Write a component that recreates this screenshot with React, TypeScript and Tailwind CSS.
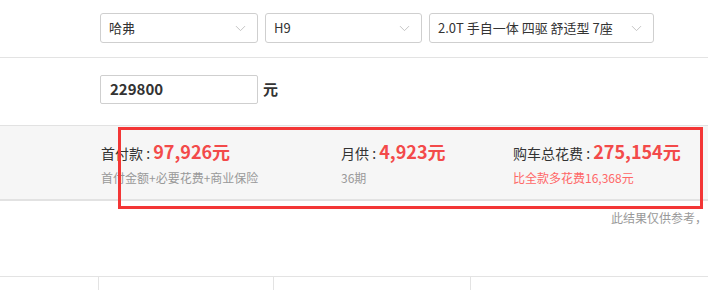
import { ChevronDown } from 'lucide-react';

const font = { fontFamily: '"Microsoft YaHei", "Noto Sans CJK SC", "Noto Sans", sans-serif' };

function Select({ value, width }: { value: string; width: string }) {
  return (
    <div
      className={`flex h-[30px] ${width} items-center justify-between rounded-[3px] border border-[#cfcfcf] bg-white pl-[8px] pr-[8px] text-[13px] text-[#333]`}
    >
      <span className="whitespace-nowrap">{value}</span>
      <ChevronDown className="h-[17px] w-[17px] text-[#bbb]" strokeWidth={1.2} />
    </div>
  );
}

export default function App() {
  return (
    <div className="relative h-[290px] w-[708px] overflow-hidden bg-white" style={font}>
      <div className="flex h-[58px] gap-[7px] border-b border-[#e3e3e3] pl-[100px] pt-[13px]">
        <Select value="哈弗" width="w-[158px]" />
        <Select value="H9" width="w-[157px]" />
        <Select value="2.0T 手自一体 四驱 舒适型 7座" width="w-[225px]" />
      </div>

      <div className="flex h-[67px] items-start gap-[5px] pl-[100px] pt-[17px]">
        <div className="flex h-[29px] w-[158px] items-center rounded-[2px] border border-[#cfcfcf] bg-white pl-[9px] text-[15px] font-bold text-[#333]">
          229800
        </div>
        <span className="pt-[3px] text-[15px] font-bold text-[#333]">元</span>
      </div>

      <div className="flex h-[76px] border-t border-b-2 border-[#e2e2e2] bg-[#f6f6f6] pl-[101px] pt-[12px]">
        <div className="w-[240px]">
          <div className="flex items-baseline text-[14px] text-[#333]">
            <span>首付款 :&nbsp;</span>
            <span className="text-[18px] font-bold text-[#f34a4a]">97,926元</span>
          </div>
          <div className="mt-[4px] text-[12px] text-[#999]">首付金额+必要花费+商业保险</div>
        </div>
        <div className="w-[172px]">
          <div className="flex items-baseline text-[14px] text-[#333]">
            <span>月供 :&nbsp;</span>
            <span className="text-[18px] font-bold text-[#f34a4a]">4,923元</span>
          </div>
          <div className="mt-[4px] text-[12px] text-[#999]">36期</div>
        </div>
        <div className="flex-1">
          <div className="flex items-baseline text-[14px] text-[#333]">
            <span>购车总花费 :&nbsp;</span>
            <span className="text-[18px] font-bold text-[#f34a4a]">275,154元</span>
          </div>
          <div className="mt-[4px] text-[12px] text-[#f66]">比全款多花费16,368元</div>
        </div>
      </div>

      <div className="h-[75px] whitespace-nowrap pl-[611px] pt-[8px] text-[12px] text-[#999]">
        此结果仅供参考，
      </div>

      <div className="grid h-[20px] grid-cols-[99px_175px_197px_1fr] border-t border-[#e3e3e3]">
        <div className="border-r border-[#e3e3e3]" />
        <div className="border-r border-[#e3e3e3]" />
        <div className="border-r border-[#e3e3e3]" />
        <div />
      </div>

      <div className="pointer-events-none absolute left-[118px] top-[127px] h-[82px] w-[585px] border-[3px] border-[#f33636]" />
    </div>
  );
}
